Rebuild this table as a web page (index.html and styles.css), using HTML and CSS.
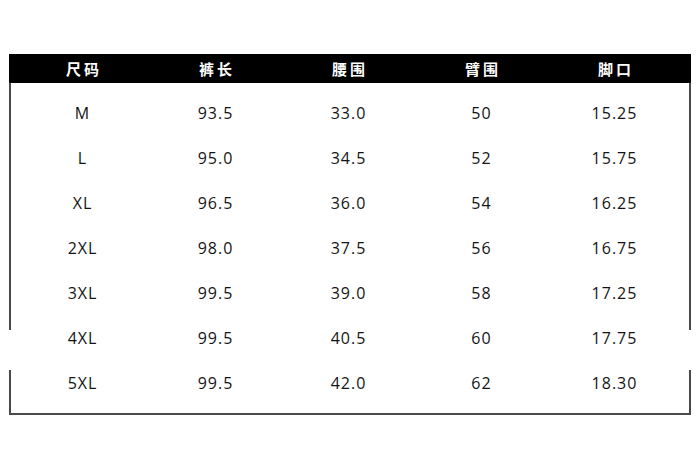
FILE: index.html
```html
<!DOCTYPE html>
<html lang="zh">
<head>
<meta charset="utf-8">
<title>尺码表</title>
<link rel="stylesheet" href="styles.css">
</head>
<body>
<div class="page">
  <div class="table">
    <div class="head">
      <div>尺码</div><div>裤长</div><div>腰围</div><div>臂围</div><div>脚口</div>
    </div>
    <div class="body">
      <div class="row"><div>M</div><div>93.5</div><div>33.0</div><div>50</div><div>15.25</div></div>
      <div class="row"><div>L</div><div>95.0</div><div>34.5</div><div>52</div><div>15.75</div></div>
      <div class="row"><div>XL</div><div>96.5</div><div>36.0</div><div>54</div><div>16.25</div></div>
      <div class="row"><div>2XL</div><div>98.0</div><div>37.5</div><div>56</div><div>16.75</div></div>
      <div class="row"><div>3XL</div><div>99.5</div><div>39.0</div><div>58</div><div>17.25</div></div>
      <div class="row"><div>4XL</div><div>99.5</div><div>40.5</div><div>60</div><div>17.75</div></div>
      <div class="row"><div>5XL</div><div>99.5</div><div>42.0</div><div>62</div><div>18.30</div></div>
    </div>
  </div>
</div>
</body>
</html>
```
FILE: styles.css
```css
html, body {
  margin: 0;
  padding: 0;
  background: #fff;
}
.page {
  width: 700px;
  height: 470px;
  padding: 54px 0 0 9px;
  box-sizing: border-box;
  font-family: "Open Sans", "Noto Sans CJK SC", sans-serif;
}
.table {
  width: 682px;
}
.head, .row {
  display: grid;
  grid-template-columns: repeat(5, 1fr);
  padding: 0 10px 0 7px;
  text-align: center;
}
.head {
  height: 29px;
  background: #000;
  color: #fff;
  font-family: "Noto Sans CJK SC", sans-serif;
  font-weight: 700;
  font-size: 15px;
  letter-spacing: 3px;
  line-height: 29px;
  text-indent: 3px;
}
.body {
  padding: 8px 0 7px;
  border-bottom: 2px solid #4a4a4a;
  background-image:
    linear-gradient(to bottom, #4a4a4a 0, #4a4a4a 247px, transparent 247px, transparent 287px, #4a4a4a 287px),
    linear-gradient(to bottom, #4a4a4a 0, #4a4a4a 247px, transparent 247px, transparent 287px, #4a4a4a 287px);
  background-repeat: no-repeat;
  background-size: 2px 100%, 2px 100%;
  background-position: left top, right top;
}
.row {
  height: 45px;
  line-height: 45px;
  font-size: 16px;
  font-weight: 500;
  letter-spacing: 1px;
  color: #141414;
}
```
